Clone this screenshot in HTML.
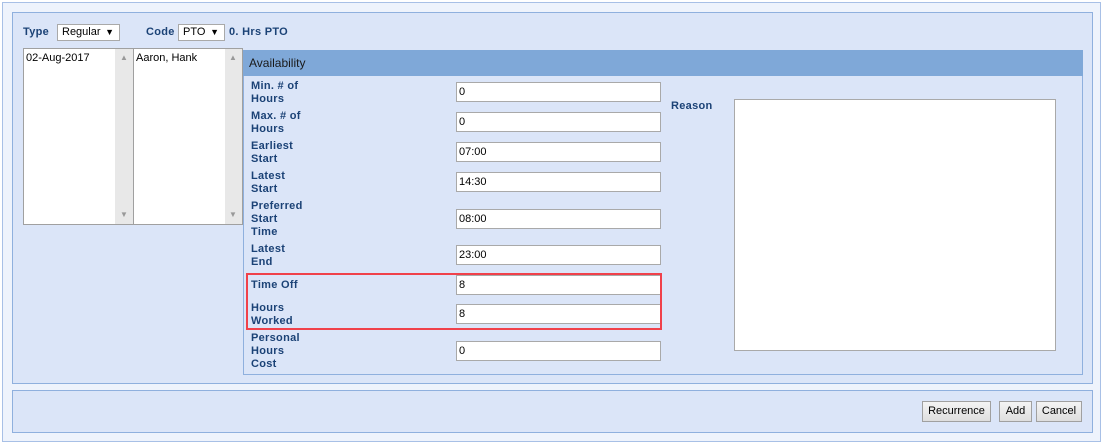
<!DOCTYPE html>
<html><head><style>
*{box-sizing:border-box;margin:0;padding:0}
body{width:1104px;height:445px;background:#fff;font-family:"Liberation Sans",Verdana,sans-serif;font-size:11px;position:relative;overflow:hidden}
.a{position:absolute}
.outer{left:2px;top:2px;width:1099px;height:440px;border:1px solid #a8c0e6;background:#eef3fc}
.panel{background:#dbe5f8;border:1px solid #8fb0de}
.lbl{color:#1b4276;font-weight:bold;font-size:11px;line-height:13px;letter-spacing:0.3px}
.in{background:#fff;border:1px solid #a9a9a9;font-size:11px;padding-left:2px;line-height:18px;color:#000}
.sel{background:#fff;border:1px solid #a9a9a9;font-size:11px;padding-left:4px;line-height:15px}
.btn{background:linear-gradient(#f4f4f4,#dedede);border:1px solid #a0a0a0;font-size:11px;text-align:center;line-height:18px;color:#000}
.sb{background:#e8e8e8}
</style></head><body>
<div class="a outer"></div>
<div class="a panel" style="left:12px;top:12px;width:1081px;height:372px"></div>
<div class="a panel" style="left:12px;top:390px;width:1081px;height:43px"></div>

<div class="a lbl" style="left:23px;top:26px">Type</div>
<div class="a sel" style="left:57px;top:24px;width:63px;height:17px">Regular<span style="position:absolute;right:5px;font-size:9px">▼</span></div>
<div class="a lbl" style="left:146px;top:26px">Code</div>
<div class="a sel" style="left:178px;top:24px;width:47px;height:17px">PTO<span style="position:absolute;right:5px;font-size:9px">▼</span></div>
<div class="a lbl" style="left:229px;top:26px">0. Hrs PTO</div>

<div class="a" style="left:23px;top:48px;width:111px;height:177px;background:#fff;border:1px solid #a0a0a0"></div>
<div class="a sb" style="left:115px;top:49px;width:18px;height:175px"></div>
<div class="a" style="left:26px;top:52px;font-size:11px">02-Aug-2017</div>
<div class="a" style="left:120px;top:53px;color:#999;font-size:8px">▲</div>
<div class="a" style="left:120px;top:210px;color:#999;font-size:8px">▼</div>
<div class="a" style="left:133px;top:48px;width:110px;height:177px;background:#fff;border:1px solid #a0a0a0"></div>
<div class="a sb" style="left:225px;top:49px;width:17px;height:175px"></div>
<div class="a" style="left:136px;top:52px;font-size:11px">Aaron, Hank</div>
<div class="a" style="left:229px;top:53px;color:#999;font-size:8px">▲</div>
<div class="a" style="left:229px;top:210px;color:#999;font-size:8px">▼</div>

<div class="a" style="left:243px;top:50px;width:840px;height:325px;border:1px solid #8fb0de;border-top:none"></div>
<div class="a" style="left:243px;top:50px;width:840px;height:26px;background:#7fa8d8;color:#1a1a1a;font-size:12px;padding:6px 0 0 6px">Availability</div>

<div class="a lbl" style="left:251px;top:80px">Min. # of<br>Hours</div>
<div class="a in" style="left:456px;top:82px;width:205px;height:20px">0</div>
<div class="a lbl" style="left:251px;top:110px">Max. # of<br>Hours</div>
<div class="a in" style="left:456px;top:112px;width:205px;height:20px">0</div>
<div class="a lbl" style="left:251px;top:140px">Earliest<br>Start</div>
<div class="a in" style="left:456px;top:142px;width:205px;height:20px">07:00</div>
<div class="a lbl" style="left:251px;top:170px">Latest<br>Start</div>
<div class="a in" style="left:456px;top:172px;width:205px;height:20px">14:30</div>
<div class="a lbl" style="left:251px;top:200px">Preferred<br>Start<br>Time</div>
<div class="a in" style="left:456px;top:209px;width:205px;height:20px">08:00</div>
<div class="a lbl" style="left:251px;top:243px">Latest<br>End</div>
<div class="a in" style="left:456px;top:245px;width:205px;height:20px">23:00</div>
<div class="a lbl" style="left:251px;top:279px">Time Off</div>
<div class="a in" style="left:456px;top:275px;width:205px;height:20px">8</div>
<div class="a lbl" style="left:251px;top:302px">Hours<br>Worked</div>
<div class="a in" style="left:456px;top:304px;width:205px;height:20px">8</div>
<div class="a" style="left:246px;top:273px;width:416px;height:57px;border:2px solid #f0414b"></div>
<div class="a lbl" style="left:251px;top:332px">Personal<br>Hours<br>Cost</div>
<div class="a in" style="left:456px;top:341px;width:205px;height:20px">0</div>

<div class="a lbl" style="left:671px;top:100px">Reason</div>
<div class="a" style="left:734px;top:99px;width:322px;height:252px;background:#fff;border:1px solid #a9a9a9"></div>

<div class="a btn" style="left:922px;top:401px;width:69px;height:21px">Recurrence</div>
<div class="a btn" style="left:999px;top:401px;width:33px;height:21px">Add</div>
<div class="a btn" style="left:1036px;top:401px;width:46px;height:21px">Cancel</div>
</body></html>
